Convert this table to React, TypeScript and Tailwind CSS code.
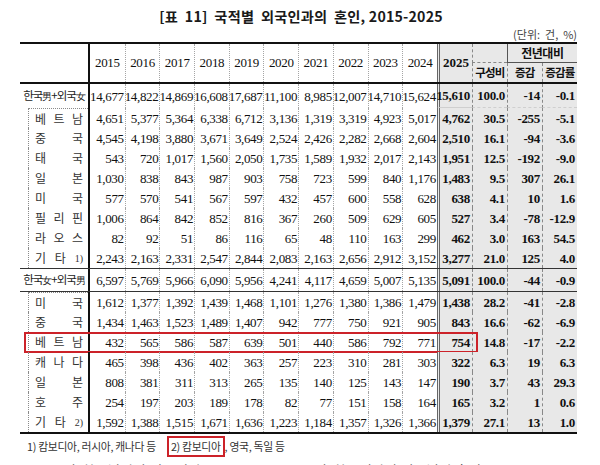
import React from 'react';

const years = ['2015', '2016', '2017', '2018', '2019', '2020', '2021', '2022', '2023', '2024'];

interface Row {
  label: string[];
  note?: string;
  vals: string[];
  y25: string;
  share: string;
  diff: string;
  rate: string;
  group?: 'm' | 'f';
  first?: boolean;
  mark?: boolean;
}

const r = (label: string[], line: string, extra: Partial<Row> = {}): Row => {
  const p = line.split(' ');
  return { label, vals: p.slice(0, 10), y25: p[10], share: p[11], diff: p[12], rate: p[13], ...extra };
};

const groupOne: Row[] = [
  r([], '14,677 14,822 14,869 16,608 17,687 11,100 8,985 12,007 14,710 15,624 15,610 100.0 -14 -0.1', { group: 'm' }),
  r(['베', '트', '남'], '4,651 5,377 5,364 6,338 6,712 3,136 1,319 3,319 4,923 5,017 4,762 30.5 -255 -5.1', { first: true }),
  r(['중', '국'], '4,545 4,198 3,880 3,671 3,649 2,524 2,426 2,282 2,668 2,604 2,510 16.1 -94 -3.6'),
  r(['태', '국'], '543 720 1,017 1,560 2,050 1,735 1,589 1,932 2,017 2,143 1,951 12.5 -192 -9.0'),
  r(['일', '본'], '1,030 838 843 987 903 758 723 599 840 1,176 1,483 9.5 307 26.1'),
  r(['미', '국'], '577 570 541 567 597 432 457 600 558 628 638 4.1 10 1.6'),
  r(['필', '리', '핀'], '1,006 864 842 852 816 367 260 509 629 605 527 3.4 -78 -12.9'),
  r(['라', '오', '스'], '82 92 51 86 116 65 48 110 163 299 462 3.0 163 54.5'),
  r(['기', '타'], '2,243 2,163 2,331 2,547 2,844 2,083 2,163 2,656 2,912 3,152 3,277 21.0 125 4.0', { note: '1)' }),
];

const groupTwo: Row[] = [
  r([], '6,597 5,769 5,966 6,090 5,956 4,241 4,117 4,659 5,007 5,135 5,091 100.0 -44 -0.9', { group: 'f' }),
  r(['미', '국'], '1,612 1,377 1,392 1,439 1,468 1,101 1,276 1,380 1,386 1,479 1,438 28.2 -41 -2.8', { first: true }),
  r(['중', '국'], '1,434 1,463 1,523 1,489 1,407 942 777 750 921 905 843 16.6 -62 -6.9'),
  r(['베', '트', '남'], '432 565 586 587 639 501 440 586 792 771 754 14.8 -17 -2.2', { mark: true }),
  r(['캐', '나', '다'], '465 398 436 402 363 257 223 310 281 303 322 6.3 19 6.3'),
  r(['일', '본'], '808 381 311 313 265 135 140 125 143 147 190 3.7 43 29.3'),
  r(['호', '주'], '254 197 203 189 178 82 77 151 158 164 165 3.2 1 0.6'),
  r(['기', '타'], '1,592 1,388 1,515 1,671 1,636 1,223 1,184 1,357 1,326 1,366 1,379 27.1 13 1.0', { note: '2)' }),
];

// left border of each data column (0 = 2015 ... 13 = 증감률)
const colBorder = [
  '',
  'border-l border-dotted border-[#a5a5a5]',
  'border-l border-dotted border-[#a5a5a5]',
  'border-l border-dotted border-[#a5a5a5]',
  'border-l border-dotted border-[#a5a5a5]',
  'border-l border-dotted border-[#a5a5a5]',
  'border-l border-dotted border-[#a5a5a5]',
  'border-l border-dotted border-[#a5a5a5]',
  'border-l border-dotted border-[#a5a5a5]',
  'border-l border-dotted border-[#a5a5a5]',
  'border-l-[3px] border-double border-[#666]',
  'border-l border-dashed border-[#888]',
  'border-l border-dashed border-[#888]',
  'border-l border-dashed border-[#888]',
];

const gridCols = 'grid grid-cols-[70px_repeat(10,34.7px)_repeat(4,35px)]';
const serif = "font-['Liberation_Serif','Times_New_Roman',serif]";
const kr = "font-['Noto_Sans_CJK_KR','Noto_Sans',sans-serif]";

function GroupLabel({ kind }: { kind: 'm' | 'f' }) {
  const [a, b] = kind === 'm' ? ['男', '女'] : ['女', '男'];
  return (
    <div className={`flex items-center justify-center border-r-2 border-[#111] text-[11.5px] tracking-[-1px] text-[#222] ${kr}`}>
      한국<span className={`text-[10px] ${serif}`}>{a}</span>+외국<span className={`text-[10px] ${serif}`}>{b}</span>
    </div>
  );
}

function DataRow({ row }: { row: Row }) {
  const cells = [...row.vals, row.y25, row.share, row.diff, row.rate];
  const isGroup = !!row.group;
  return (
    <div className={`relative ${gridCols} ${isGroup ? 'h-[24px]' : 'h-[20px]'} ${row.group === 'f' ? 'h-[22px] border-y border-[#333]' : ''}`}>
      {isGroup ? (
        <GroupLabel kind={row.group!} />
      ) : (
        <div className="flex border-r-2 border-[#111]">
          <div
            className={`ml-2 flex flex-1 items-center justify-between border-l border-dotted border-[#8a8a8a] pl-[6px] pr-[5px] text-[12px] text-[#333] ${kr} ${row.first ? 'border-t' : ''}`}
          >
            {row.label.map((c, i) => (
              <span key={i}>{c}</span>
            ))}
            {row.note && <span className={`text-[10px] ${serif}`}>{row.note}</span>}
          </div>
        </div>
      )}
      {cells.map((v, i) => (
        <div
          key={i}
          className={`flex items-center justify-end pr-[1px] text-[13px] leading-none tracking-[-0.35px] text-[#111] ${serif} ${colBorder[i]} ${
            i >= 10 ? 'bg-[#e8e8e8] font-bold pr-[2px]' : ''
          } ${row.group === 'm' && i >= 10 ? 'border-b border-b-[#cfcfcf]' : ''}`}
        >
          {v}
        </div>
      ))}
      {row.mark && <div className="absolute left-[4px] top-[0px] h-[21px] w-[454px] border-2 border-[#cc2229]" />}
    </div>
  );
}

export default function App() {
  return (
    <div className="relative h-[465px] w-[600px] overflow-hidden bg-white text-[#111]">
      <div className={`pt-[5px] pl-[2px] text-center text-[14.2px] font-bold leading-[22px] tracking-[0.2px] text-[#1a1a1a] ${kr}`}>
        [표&nbsp; 11]&nbsp; 국적별&nbsp; 외국인과의&nbsp; 혼인, 2015-2025
      </div>
      <div className={`h-[15px] pr-[23px] text-right text-[11px] leading-[15px] text-[#444] ${kr}`}>
        (단위:&nbsp; 건,&nbsp; %)
      </div>

      <div className="ml-[20px] w-[557px] border-y-2 border-[#111]">
        {/* header */}
        <div className={`${gridCols} grid-rows-[19px_19px] border-b-2 border-[#111]`}>
          <div className="row-span-2 border-r-2 border-[#111]" />
          {years.map((y, i) => (
            <div
              key={y}
              className={`row-span-2 flex items-center justify-center text-[13px] tracking-[-0.3px] ${serif} ${colBorder[i]}`}
            >
              {y}
            </div>
          ))}
          <div className={`row-span-2 flex items-center justify-center bg-[#e8e8e8] text-[13px] font-bold ${serif} ${colBorder[10]}`}>
            2025
          </div>
          <div className={`border-b border-[#444] bg-[#e8e8e8] ${colBorder[11]}`} />
          <div
            className={`col-span-2 flex items-center justify-center border-b border-l border-[#555] bg-[#e8e8e8] text-[12px] font-bold tracking-[-0.5px] ${kr}`}
          >
            전년대비
          </div>
          <div className={`flex items-center justify-center bg-[#e8e8e8] text-[11.5px] font-bold tracking-[-0.8px] ${kr} ${colBorder[11]}`}>
            구성비
          </div>
          <div className={`flex items-center justify-center bg-[#e8e8e8] text-[11.5px] font-bold tracking-[-0.8px] ${kr} ${colBorder[12]}`}>
            증감
          </div>
          <div className={`flex items-center justify-center bg-[#e8e8e8] text-[11.5px] font-bold tracking-[-0.8px] ${kr} ${colBorder[13]}`}>
            증감률
          </div>
        </div>

        {groupOne.map((row, i) => (
          <DataRow key={`a${i}`} row={row} />
        ))}
        {groupTwo.map((row, i) => (
          <DataRow key={`b${i}`} row={row} />
        ))}
      </div>

      <div className={`ml-[27px] mt-[2px] flex items-center text-[10.8px] tracking-[-0.3px] text-[#333] ${kr}`}>
        <span>1) 캄보디아, 러시아, 캐나다 등</span>
        <span className="ml-[11px] inline-block h-[21px] border-2 border-[#cc2229] pl-[2px] pr-[2px] leading-[17px]">2) 캄보디아</span>
        <span>, 영국, 독일 등</span>
      </div>

      <div className={`mt-[3px] flex text-[14px] text-[#555] ${kr}`}>
        <span className="ml-[50px]">그림 &nbsp;한국남자와 외국여자</span>
        <span className="ml-[100px]">그림 &nbsp;한국여자와 외국남자 혼인</span>
      </div>
    </div>
  );
}
